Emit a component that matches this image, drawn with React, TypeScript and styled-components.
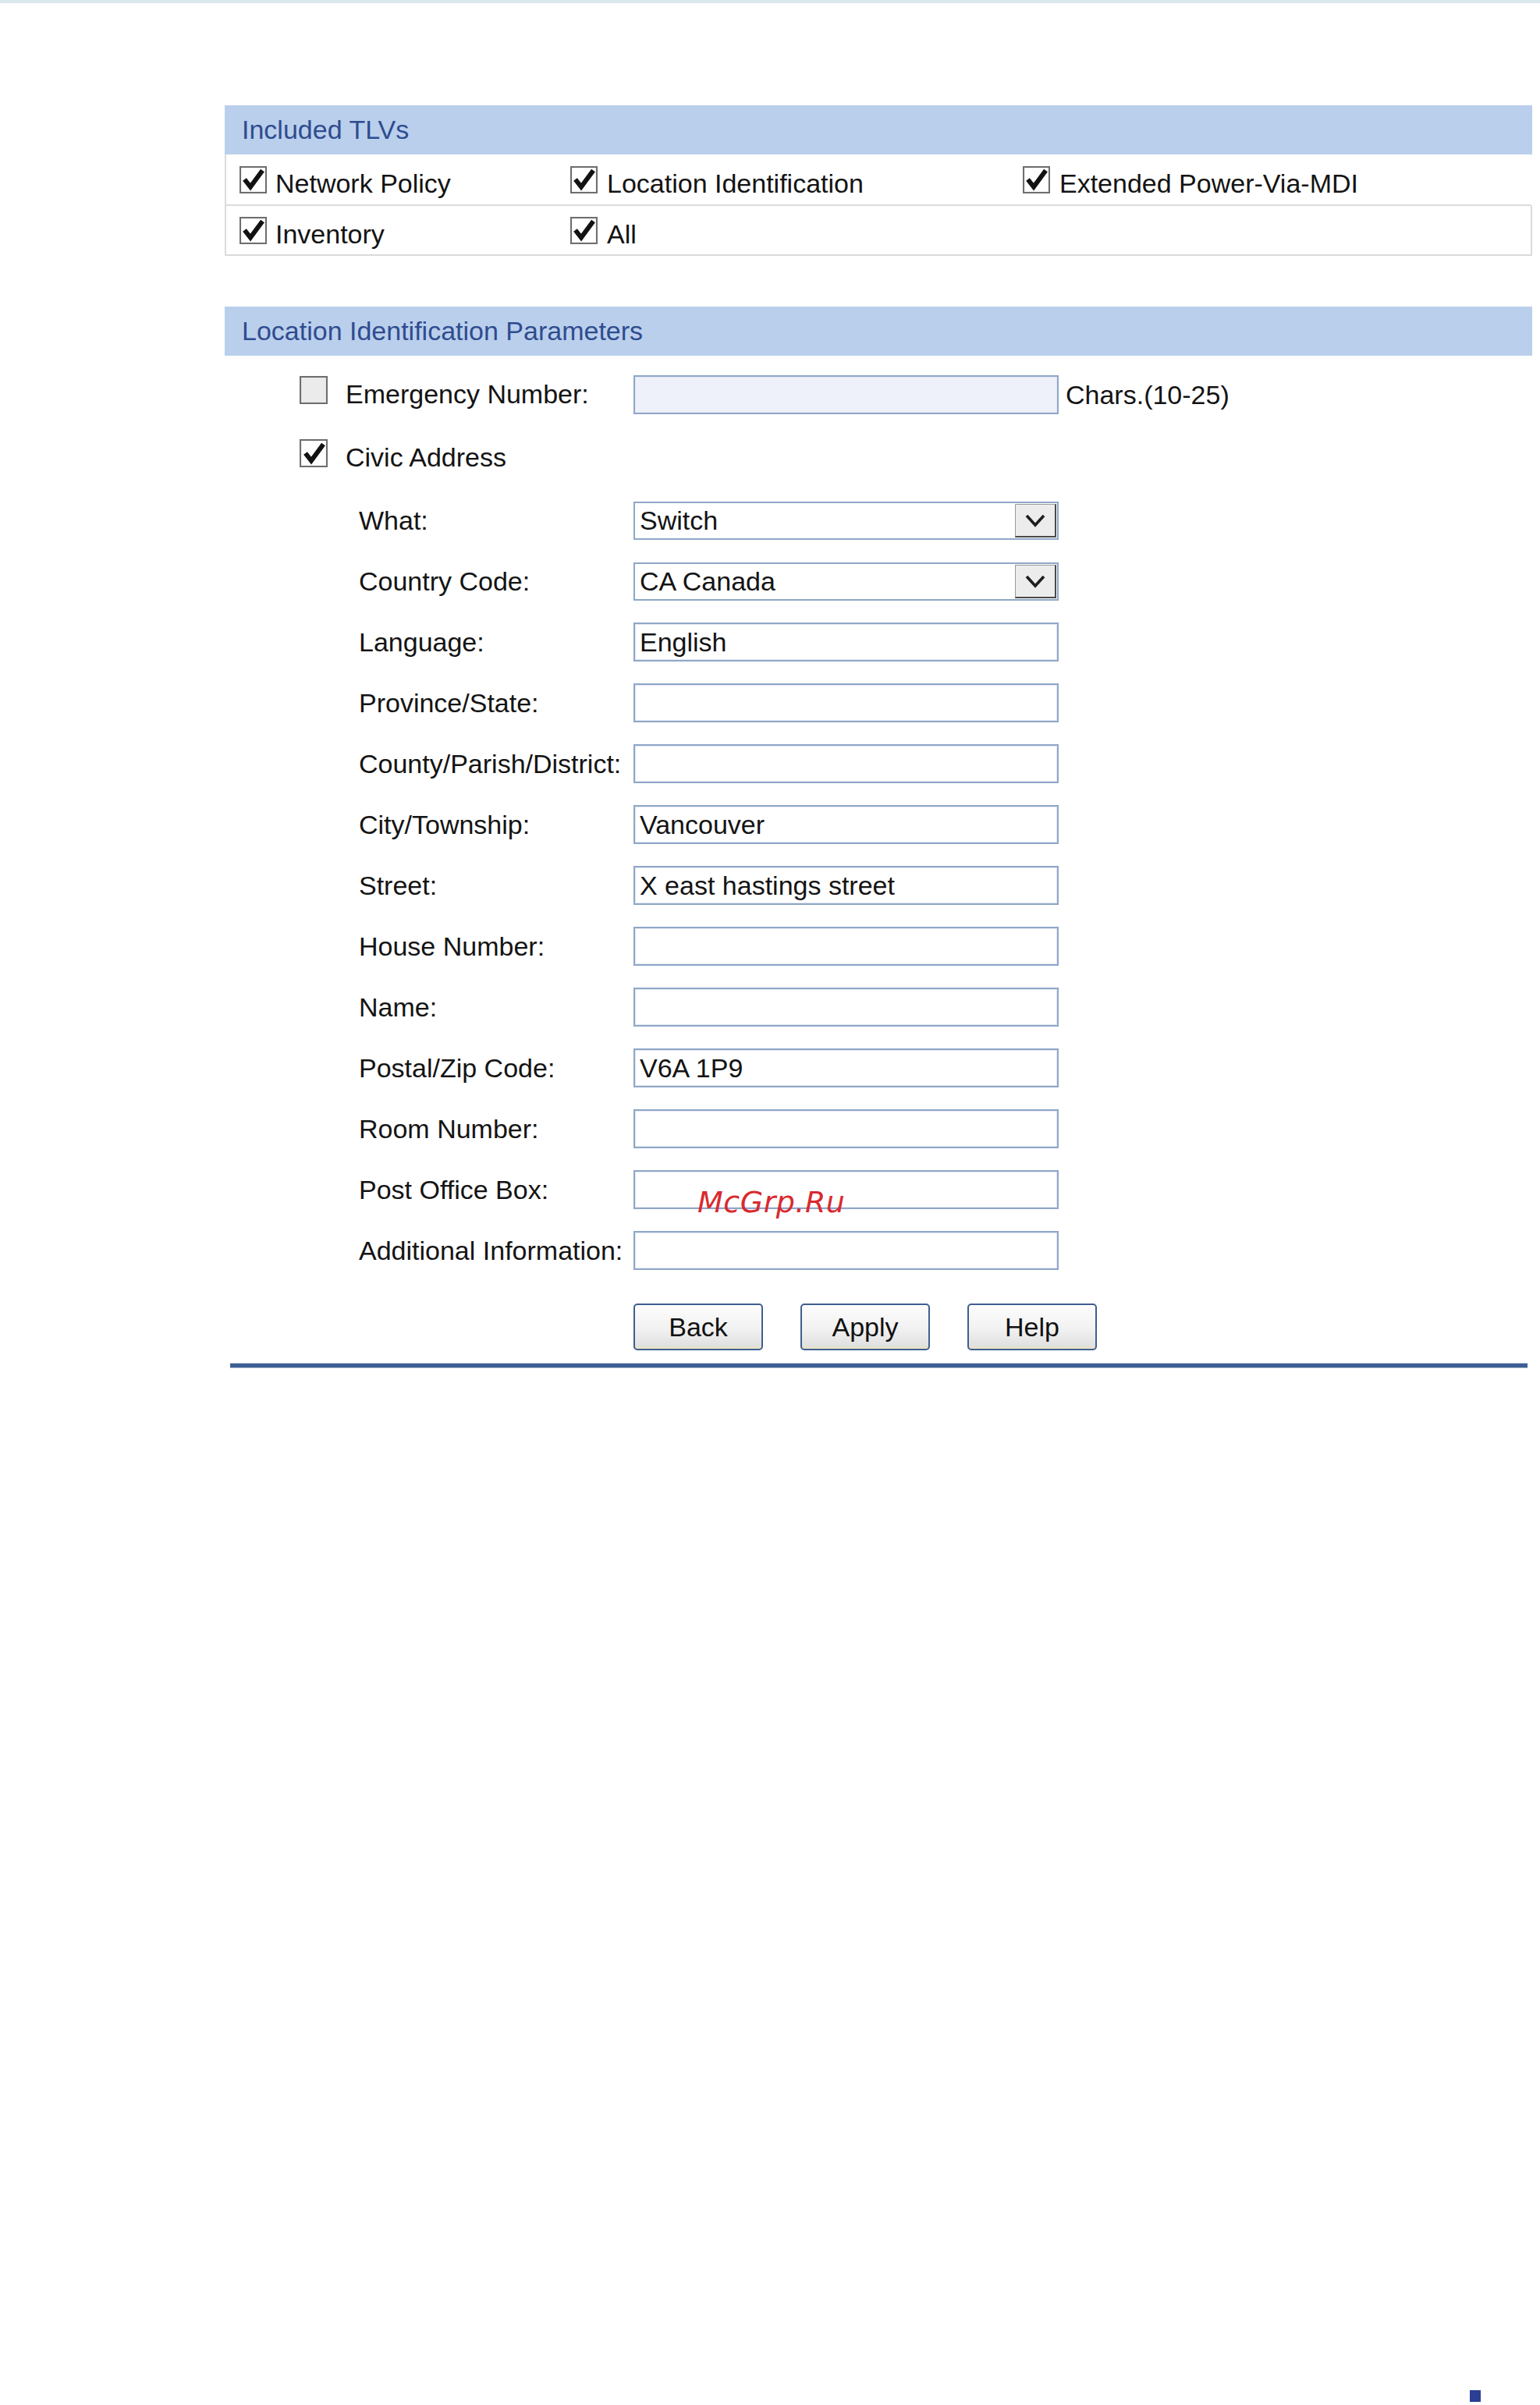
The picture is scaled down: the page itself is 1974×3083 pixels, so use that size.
import React from "react";
import styled, { createGlobalStyle } from "styled-components";

const Global = createGlobalStyle`
  html, body { margin: 0; padding: 0; background: #ffffff; overflow: hidden; }
  * { box-sizing: border-box; }
`;

const Page = styled.div`
  position: relative;
  width: 1974px;
  height: 3083px;
  overflow: hidden;
  background: #ffffff;
  font-family: "Liberation Sans", Arial, Helvetica, sans-serif;
  font-size: 34px;
  color: #141414;
`;

const TopBar = styled.div`
  height: 4px;
  background: #dce7ee;
`;

const Content = styled.div`
  margin: 131px 0 0 288px;
  width: 1676px;
`;

const SectionHeader = styled.div<{ $mt?: number }>`
  margin-top: ${(p) => p.$mt ?? 0}px;
  height: 63px;
  background: #bacfec;
  color: #2f4c8f;
  font-size: 34px;
  line-height: 63px;
  padding-left: 22px;
  white-space: nowrap;
`;

const TlvRow = styled.div<{ $closed?: boolean }>`
  display: grid;
  grid-template-columns: 424px 580px 1fr;
  align-items: center;
  height: ${(p) => (p.$closed ? 64 : 66)}px;
  padding-left: 17px;
  border-left: 2px solid #dadada;
  border-bottom: 2px solid #dadada;
  border-right: 2px solid ${(p) => (p.$closed ? "#dadada" : "transparent")};
`;

const CheckItem = styled.label<{ $gap?: number }>`
  display: flex;
  align-items: flex-end;
  gap: ${(p) => p.$gap ?? 11}px;
  white-space: nowrap;
`;

const CheckText = styled.span`
  line-height: 1;
  margin-bottom: -4px;
`;

const Box = styled.span<{ $size?: number; $checked: boolean }>`
  display: inline-flex;
  align-items: center;
  justify-content: center;
  flex: none;
  width: ${(p) => p.$size ?? 35}px;
  height: ${(p) => p.$size ?? 35}px;
  border: 2px solid #6e6e6e;
  background: ${(p) => (p.$checked ? "#ffffff" : "#ebebeb")};
  box-shadow: inset 0 0 0 1px ${(p) => (p.$checked ? "#f4f4f4" : "#e2e2e2")};
`;

const Check = ({ checked, size }: { checked: boolean; size?: number }) => (
  <Box $checked={checked} $size={size}>
    {checked && (
      <svg width="31" height="31" viewBox="0 0 31 31">
        <path d="M4.5 15 L12 24.5 L27.5 3.5" fill="none" stroke="#121212" strokeWidth="6" strokeLinejoin="miter" strokeLinecap="butt" />
      </svg>
    )}
  </Box>
);

const FormBody = styled.div`
  display: flex;
  flex-direction: column;
  padding-top: 25px;
`;

const FormRow = styled.div<{ $mt?: number }>`
  display: grid;
  grid-template-columns: 524px 545px auto;
  align-items: center;
  height: 50px;
  margin-top: ${(p) => p.$mt ?? 28}px;
`;

const LabelCell = styled.div<{ $indent: number; $lift?: number }>`
  padding-left: ${(p) => p.$indent}px;
  padding-bottom: ${(p) => p.$lift ?? 0}px;
  white-space: nowrap;
  display: flex;
  align-items: center;
`;

const TextInput = styled.input<{ $tint?: boolean }>`
  width: 545px;
  height: 50px;
  border: 2px solid #8fa7c8;
  box-shadow: inset 0 0 0 1px #e3e9f2;
  background: ${(p) => (p.$tint ? "#eef0fa" : "#ffffff")};
  font-family: "Liberation Sans", Arial, sans-serif;
  font-size: 34px;
  color: #141414;
  padding: 0 6px;
  outline: none;
  margin: 0;
`;

const Hint = styled.span`
  padding-left: 9px;
  white-space: nowrap;
`;

const Select = styled.div`
  display: flex;
  align-items: stretch;
  width: 545px;
  height: 49px;
  border: 2px solid #8fa7c8;
  background: #ffffff;
`;

const SelectText = styled.span`
  flex: 1;
  padding-left: 6px;
  line-height: 45px;
  white-space: nowrap;
`;

const SelectArrow = styled.span`
  display: flex;
  align-items: center;
  justify-content: center;
  width: 53px;
  margin: 1px;
  background: #ececec;
  border: 1px solid #9a9a9a;
  border-right: 2px solid #4a4a4a;
  border-bottom: 2px solid #4a4a4a;
`;

const ButtonRow = styled.div`
  display: flex;
  gap: 48px;
  margin-top: 43px;
  padding-left: 524px;
`;

const Button = styled.button`
  width: 166px;
  height: 60px;
  border: 2px solid #3f5e90;
  border-radius: 5px;
  background: linear-gradient(#fdfdfd 0%, #f1f1f1 55%, #dedede 100%);
  box-shadow: inset 0 -3px 0 #e6e2c8;
  font-family: "Liberation Sans", Arial, sans-serif;
  font-size: 34px;
  color: #111111;
  padding: 0;
`;

const Divider = styled.div`
  margin: 17px 0 0 7px;
  width: 1663px;
  height: 5px;
  background: #3d5e92;
  box-shadow: 0 1px 0 #b4c4da, 0 -1px 0 #b4c4da;
`;

const Watermark = styled.div`
  position: absolute;
  left: 894px;
  top: 1522px;
  font-family: "DejaVu Sans", "Liberation Sans", sans-serif;
  font-style: italic;
  font-size: 38px;
  line-height: 1;
  color: #d92a2f;
  letter-spacing: 0.5px;
`;

const PageMark = styled.div`
  position: absolute;
  left: 1884px;
  top: 3064px;
  width: 14px;
  height: 15px;
  background: #2b3f93;
`;

const Arrow = () => (
  <svg width="28" height="18" viewBox="0 0 28 18">
    <path d="M3 3 L14 15 L25 3" fill="none" stroke="#1e1e1e" strokeWidth="3.6" />
  </svg>
);

type Field = { label: string; value?: string; select?: boolean };

const fields: Field[] = [
  { label: "What:", value: "Switch", select: true },
  { label: "Country Code:", value: "CA Canada", select: true },
  { label: "Language:", value: "English" },
  { label: "Province/State:" },
  { label: "County/Parish/District:" },
  { label: "City/Township:", value: "Vancouver" },
  { label: "Street:", value: "X east hastings street" },
  { label: "House Number:" },
  { label: "Name:" },
  { label: "Postal/Zip Code:", value: "V6A 1P9" },
  { label: "Room Number:" },
  { label: "Post Office Box:" },
  { label: "Additional Information:" },
];

export default function App() {
  return (
    <Page>
      <Global />
      <TopBar />
      <Content>
        <SectionHeader>Included TLVs</SectionHeader>
        <TlvRow>
          <CheckItem><Check checked /><CheckText>Network Policy</CheckText></CheckItem>
          <CheckItem $gap={12}><Check checked /><CheckText>Location Identification</CheckText></CheckItem>
          <CheckItem $gap={12}><Check checked /><CheckText>Extended Power-Via-MDI</CheckText></CheckItem>
        </TlvRow>
        <TlvRow $closed>
          <CheckItem><Check checked /><CheckText>Inventory</CheckText></CheckItem>
          <CheckItem $gap={12}><Check checked /><CheckText>All</CheckText></CheckItem>
        </TlvRow>

        <SectionHeader $mt={65}>Location Identification Parameters</SectionHeader>
        <FormBody>
          <FormRow $mt={0}>
            <LabelCell $indent={96} $lift={12}>
              <CheckItem $gap={23}><Check checked={false} size={36} /><CheckText>Emergency Number:</CheckText></CheckItem>
            </LabelCell>
            <TextInput $tint readOnly value="" />
            <Hint>Chars.(10-25)</Hint>
          </FormRow>
          <FormRow $mt={25}>
            <LabelCell $indent={96}>
              <CheckItem $gap={23}><Check checked size={36} /><CheckText>Civic Address</CheckText></CheckItem>
            </LabelCell>
          </FormRow>
          {fields.map((f, i) => (
            <FormRow key={f.label} $mt={i === 0 ? 36 : 28}>
              <LabelCell $indent={172}>{f.label}</LabelCell>
              {f.select ? (
                <Select>
                  <SelectText>{f.value}</SelectText>
                  <SelectArrow><Arrow /></SelectArrow>
                </Select>
              ) : (
                <TextInput readOnly value={f.value ?? ""} />
              )}
            </FormRow>
          ))}
          <ButtonRow>
            <Button>Back</Button>
            <Button>Apply</Button>
            <Button>Help</Button>
          </ButtonRow>
          <Divider />
        </FormBody>
      </Content>
      <Watermark>McGrp.Ru</Watermark>
      <PageMark />
    </Page>
  );
}
